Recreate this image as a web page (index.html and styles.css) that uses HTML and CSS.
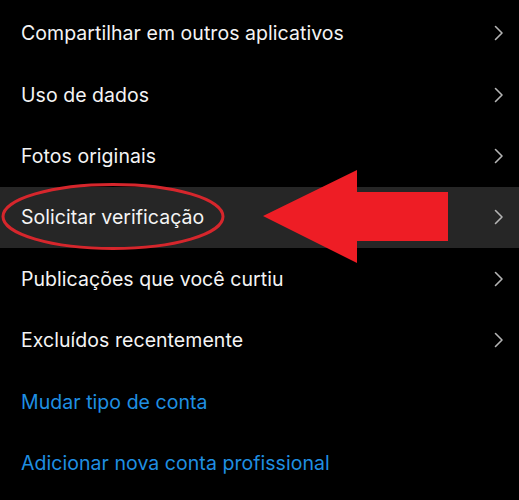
FILE: index.html
```html
<!DOCTYPE html>
<html lang="pt-BR">
<head>
<meta charset="utf-8">
<title>Configurações</title>
<link rel="stylesheet" href="styles.css">
</head>
<body>
<div class="list">
  <div class="row"><span class="label">Compartilhar em outros aplicativos</span><svg class="chev" viewBox="0 0 10 16"><path d="M1.5 1.5 L8 8 L1.5 14.5"/></svg></div>
  <div class="row"><span class="label">Uso de dados</span><svg class="chev" viewBox="0 0 10 16"><path d="M1.5 1.5 L8 8 L1.5 14.5"/></svg></div>
  <div class="row"><span class="label">Fotos originais</span><svg class="chev" viewBox="0 0 10 16"><path d="M1.5 1.5 L8 8 L1.5 14.5"/></svg></div>
  <div class="row active"><span class="label">Solicitar verificação</span><svg class="chev" viewBox="0 0 10 16"><path d="M1.5 1.5 L8 8 L1.5 14.5"/></svg>
    <svg class="ring" viewBox="0 0 230 72"><ellipse cx="113" cy="35.5" rx="110" ry="32"/></svg>
  </div>
  <div class="row"><span class="label">Publicações que você curtiu</span><svg class="chev" viewBox="0 0 10 16"><path d="M1.5 1.5 L8 8 L1.5 14.5"/></svg></div>
  <div class="row"><span class="label">Excluídos recentemente</span><svg class="chev" viewBox="0 0 10 16"><path d="M1.5 1.5 L8 8 L1.5 14.5"/></svg></div>
  <div class="row"><span class="label link">Mudar tipo de conta</span></div>
  <div class="row"><span class="label link">Adicionar nova conta profissional</span></div>
  <svg class="arrow" viewBox="0 0 200 110"><polygon points="8,56 102,10 102,32 193,32 193,81 102,81 102,103"/></svg>
</div>
</body>
</html>
```
FILE: styles.css
```css
html, body {
  margin: 0;
  padding: 0;
  background: #000;
}
body {
  font-family: Inter, "Noto Sans", "Liberation Sans", sans-serif;
  color: #f4f4f4;
  overflow: hidden;
}
.list {
  position: relative;
  padding-top: 2.5px;
}
.row {
  position: relative;
  height: 61.5px;
  display: flex;
  align-items: center;
  justify-content: space-between;
  padding: 0 15px 0 21px;
}
.row:nth-child(4) {
  margin-top: -0.5px;
}
.row.active {
  background: #262626;
}
.label {
  font-size: 19.5px;
  letter-spacing: 0.05px;
}
.link {
  color: #1f8fe2;
}
.chev {
  width: 10px;
  height: 16px;
  fill: none;
  stroke: #b4b4b4;
  stroke-width: 1.6;
  stroke-linecap: round;
  stroke-linejoin: round;
}
.ring {
  position: absolute;
  left: 0;
  top: -6px;
  width: 230px;
  height: 72px;
  overflow: visible;
  fill: none;
  stroke: #d6262c;
  stroke-width: 3;
}
.arrow {
  position: absolute;
  left: 255px;
  top: 160px;
  width: 200px;
  height: 110px;
  fill: #ee1d25;
}
```
